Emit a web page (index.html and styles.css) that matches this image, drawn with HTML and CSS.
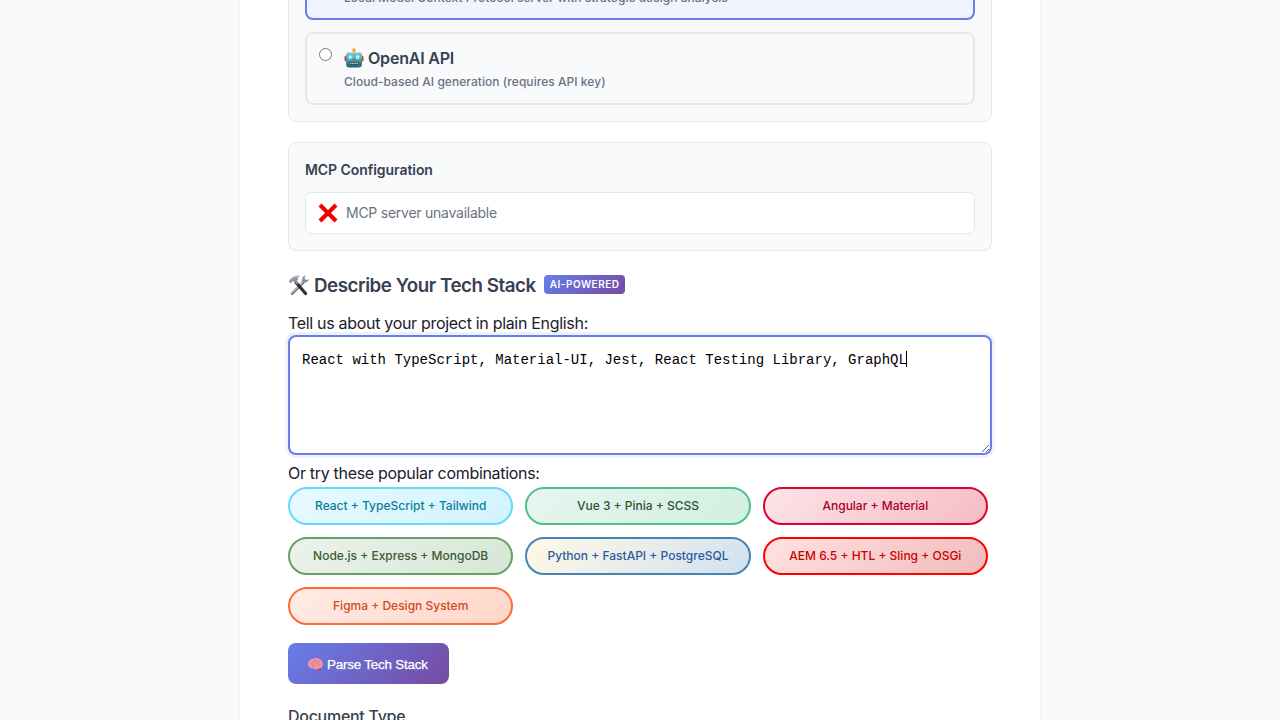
FILE: index.html
```html
<!DOCTYPE html>
<html lang="en">
<head>
<meta charset="utf-8">
<title>Tech Stack</title>
<link rel="stylesheet" href="styles.css">
</head>
<body>
<main class="page">
  <section class="card providers">
    <label class="option option-selected">
      <input class="radio" type="radio" name="provider" checked>
      <span class="option-body">
        <span class="option-title">Local MCP Server</span>
        <span class="option-desc desc-local">Local Model Context Protocol server with strategic design analysis</span>
      </span>
    </label>
    <label class="option">
      <input class="radio" type="radio" name="provider">
      <span class="option-body">
        <span class="option-title">
          <svg class="robot" viewBox="0 0 20 20">
            <defs><linearGradient id="face" x1="0" y1="0" x2="0" y2="1"><stop offset="0" stop-color="#a4bec4"/><stop offset=".55" stop-color="#4e929c"/><stop offset="1" stop-color="#1d626e"/></linearGradient></defs>
            <path d="M10 2v3" stroke="#8a3a35" stroke-width="2"/>
            <circle cx="10" cy="2" r="1.8" fill="#f9a72b"/>
            <rect x=".5" y="7.5" width="19" height="6" rx="1.5" fill="#d23a35"/>
            <rect x="2" y="4" width="16" height="15.5" rx="3.5" fill="url(#face)"/>
            <path d="M5 4.5h10" stroke="#d6e3e5" stroke-width="1"/>
            <circle cx="6.3" cy="9" r="2.8" fill="#47d7ee"/><circle cx="13.7" cy="9" r="2.8" fill="#47d7ee"/>
            <circle cx="6.3" cy="9" r="1.4" fill="#d9fbff"/><circle cx="13.7" cy="9" r="1.4" fill="#d9fbff"/>
            <path d="M10 10.3l1.3 2.3H8.7z" fill="#e23b35"/>
            <rect x="5.2" y="14" width="9.6" height="2.8" rx=".7" fill="#264951"/>
            <path d="M6 15.4h8" stroke="#cfe0e2" stroke-width="1.3" stroke-dasharray="1.4 .8"/>
          </svg>
          <span>OpenAI API</span>
        </span>
        <span class="option-desc desc-cloud">Cloud-based AI generation (requires API key)</span>
      </span>
    </label>
  </section>

  <section class="card config">
    <h4 class="config-title">MCP Configuration</h4>
    <div class="status">
      <svg class="cross" viewBox="0 0 20 20"><path d="M2 2l16 16M18 2L2 18" stroke="#f10000" stroke-width="4.2"/></svg>
      <span class="status-text">MCP server unavailable</span>
    </div>
  </section>

  <h3 class="section-title">
    <svg class="tools" viewBox="0 0 22 22">
      <path d="M15.3 8.2L4.2 19.5" stroke="#737980" stroke-width="3" stroke-linecap="round"/>
      <path d="M14.6 8L4 18.8" stroke="#c3c8cc" stroke-width="1.1" stroke-linecap="round"/>
      <path d="M17.5 1.1l-3 1.8-.8 3.6 2 2.2 3.4-.6 2.1-2.9-3 .8-1.8-1.6z" fill="#858c94"/>
      <path d="M17.2 1.5l-2.5 1.8-.5 2.8" fill="none" stroke="#c6cbd0" stroke-width=".8"/>
      <path d="M8 8.5l9.600 11" stroke="#2e3033" stroke-width="3.200" stroke-linecap="round"/>
      <path d="M6.5 6l3.2 4" stroke="#969ca2" stroke-width="2"/>
      <path d="M.8 7.8L3 4.2 6.2 2Q9 .8 12 2L9.6 3.8l.4 2-3 2.4-2-1.3-2.2 2.4z" fill="#8b9299"/>
      <path d="M3.1 5L6.5 2.8 9.8 2.3" fill="none" stroke="#d6d9dc" stroke-width="1"/>
    </svg>
    <span class="section-name">Describe Your Tech Stack</span>
    <span class="badge">AI-POWERED</span>
  </h3>

  <label class="field-label label-project" for="stack">Tell us about your project in plain English:</label>
  <div class="field">
    <textarea class="input" id="stack" spellcheck="false">React with TypeScript, Material-UI, Jest, React Testing Library, GraphQL</textarea>
    <span class="caret"></span>
  </div>

  <p class="field-label label-combos">Or try these popular combinations:</p>
  <div class="combos">
    <button class="combo react">React + TypeScript + Tailwind</button>
    <button class="combo vue">Vue 3 + Pinia + SCSS</button>
    <button class="combo angular">Angular + Material</button>
    <button class="combo node">Node.js + Express + MongoDB</button>
    <button class="combo python">Python + FastAPI + PostgreSQL</button>
    <button class="combo aem">AEM 6.5 + HTL + Sling + OSGi</button>
    <button class="combo figma">Figma + Design System</button>
  </div>

  <button class="parse">
    <svg class="brain" viewBox="0 0 18 16">
      <path d="M10.500 11.500l2 3.600 2.200-.6-.6-4z" fill="#b04a5c"/>
      <path d="M1 8.200C.7 4.600 4 1.300 8.500 1.200c4.600-.2 8.200 2.600 8.400 6.300.1 2.800-1.600 4.600-4.400 4.700-1.500.1-2 .9-3.700.8-1.300-.1-1.600-.9-3.100-1-2.500-.1-4.500-1.400-4.700-3.800z" fill="#f098a6"/>
      <path d="M2.500 8.200q1.500-2 3-.4t3-1 3 .7 4-1M4.500 4.500q2 1.400 3.500-.6t3.800.4 2.500-.4M5 10.500q1.800-1.800 3.500-.5t4-1M8 2v3M12 5v3M6 7v3" fill="none" stroke="#cc6b80" stroke-width=".55"/>
    </svg>
    <span class="parse-text">Parse Tech Stack</span>
  </button>

  <p class="doc-label">Document Type</p>
</main>
</body>
</html>
```
FILE: styles.css
```css
* { box-sizing: border-box; }
html { height: 720px; overflow: hidden; }
body {
  margin: 0;
  height: 720px;
  overflow: hidden;
  background: #f8fafc;
  color: #1a202c;
  font-family: Inter, "Liberation Sans", sans-serif;
}
.page {
  width: 800px;
  height: 720px;
  margin: 0 auto;
  padding: 0 48px;
  overflow: hidden;
  background: #fff;
  box-shadow: 0 1px 3px rgba(0, 0, 0, .1);
}
.card {
  border: 1px solid #e2e8f0;
  border-radius: 8px;
  background: #f8fafc;
  padding: 16px;
}
.providers {
  display: flex;
  flex-direction: column;
  gap: 12px;
  margin-top: -69px;
}
.option {
  display: flex;
  gap: 12px;
  height: 73px;
  padding: 12px;
  border: 2px solid #e5e7eb;
  border-radius: 8px;
}
.option-selected { border-color: #667eea; background: #f0f4ff; height: 72px; }
.radio { width: 13px; height: 13px; margin: 2px 0 0; flex: none; }
.option-body { display: flex; flex-direction: column; gap: 4px; white-space: nowrap; }
.option-title {
  display: flex;
  align-items: center;
  gap: 4px;
  height: 24px;
  font-size: 16px;
  font-weight: 600;
  letter-spacing: -.2px;
  color: #374151;
}
.robot { width: 20px; height: 20px; margin-top: -1px; }
.option-desc { font-size: 12px; line-height: 16px; font-weight: 500; color: #6b7280; }
.desc-local { letter-spacing: .03px; }
.desc-cloud { letter-spacing: .045px; }
.config { height: 109px; margin-top: 20px; }
.config-title {
  margin: 0 0 11px;
  font-size: 14px;
  line-height: 22px;
  font-weight: 600;
  letter-spacing: -.06px;
  color: #374151;
}
.status {
  display: flex;
  align-items: center;
  gap: 8px;
  height: 42px;
  padding: 0 12px;
  border: 1px solid #e2e8f0;
  border-radius: 6px;
  background: #fff;
  font-size: 14px;
  color: #6b7280;
}
.status-text { margin-top: -2px; letter-spacing: -.25px; }
.cross { width: 20px; height: 20px; margin-left: -.5px; margin-right: .5px; }
.section-title {
  display: flex;
  align-items: center;
  height: 30px;
  margin: 19px 0 0;
  font-size: 18.72px;
  font-weight: 600;
  color: #374151;
  white-space: nowrap;
}
.section-name { letter-spacing: -.44px; }
.tools { width: 22px; height: 22px; margin-right: 4px; }
.badge {
  height: 19px;
  margin: -1px 0 0 8px;
  padding: 0 6px;
  border-radius: 4px;
  background: linear-gradient(135deg, #667eea, #764ba2);
  color: #fff;
  font-size: 10px;
  line-height: 19px;
  letter-spacing: .5px;
}
.field-label { display: block; margin: 0; font-size: 16px; line-height: 24px; letter-spacing: -.31px; }
.label-project { margin-top: 11px; }
.field { position: relative; height: 120px; }
.input {
  display: block;
  width: 704px;
  height: 120px;
  padding: 13px 12px 11px;
  border: 2px solid #667eea;
  border-radius: 8px;
  outline: none;
  box-shadow: 0 0 0 3px rgba(102, 126, 234, .1);
  background: #fff;
  color: #000;
  font: 14px/21px "Liberation Mono", monospace;
  resize: vertical;
}
.caret { position: absolute; left: 618px; top: 16px; width: 1px; height: 16px; background: #000; }
.label-combos { margin-top: 6px; }
.combos {
  display: grid;
  grid-template-columns: repeat(3, 1fr);
  gap: 12px;
  width: 700px;
  margin-top: 2px;
}
.combo {
  height: 38px;
  padding: 0;
  border: 2px solid;
  border-radius: 20px;
  font: 500 12px/16px Inter, sans-serif;
}
.react { border-color: #61dafb; background: linear-gradient(135deg, #e8f9ff, #d1f4ff); color: #0a7e98; }
.vue { border-color: #4fc08d; background: linear-gradient(135deg, #e8f5f0, #d1f0e0); color: #2c5530; }
.angular { border-color: #dd0031; background: linear-gradient(135deg, #fce4e8, #f5bcc5); color: #a6001f; }
.node { border-color: #68a063; background: linear-gradient(135deg, #ebf3ea, #d7e6d6); color: #3c5a38; }
.python { border-color: #4584b6; background: linear-gradient(135deg, #fff9e6, #d1e1ef); color: #2b5aa0; }
.aem { border-color: #ff0000; background: linear-gradient(135deg, #ffe1e1, #f0bcbc); color: #cc0000; }
.figma { border-color: #ff6b35; background: linear-gradient(135deg, #ffebe6, #ffd6c9); color: #d14a1f; }
.parse {
  display: flex;
  align-items: center;
  gap: 3px;
  width: 161px;
  height: 41px;
  margin-top: 18px;
  padding: 1px 0 0 19px;
  border: 0;
  border-radius: 8px;
  background: linear-gradient(135deg, #667eea, #764ba2);
  color: #fff;
  font: 13.333px "Liberation Sans", sans-serif;
  white-space: nowrap;
}
.parse-text { letter-spacing: -.17px; -webkit-text-stroke: .25px #fff; }
.brain { width: 17px; height: 15px; }
.doc-label { margin: 20px 0 0; font-size: 16px; line-height: 24px; font-weight: 500; letter-spacing: -.28px; color: #374151; }
```
